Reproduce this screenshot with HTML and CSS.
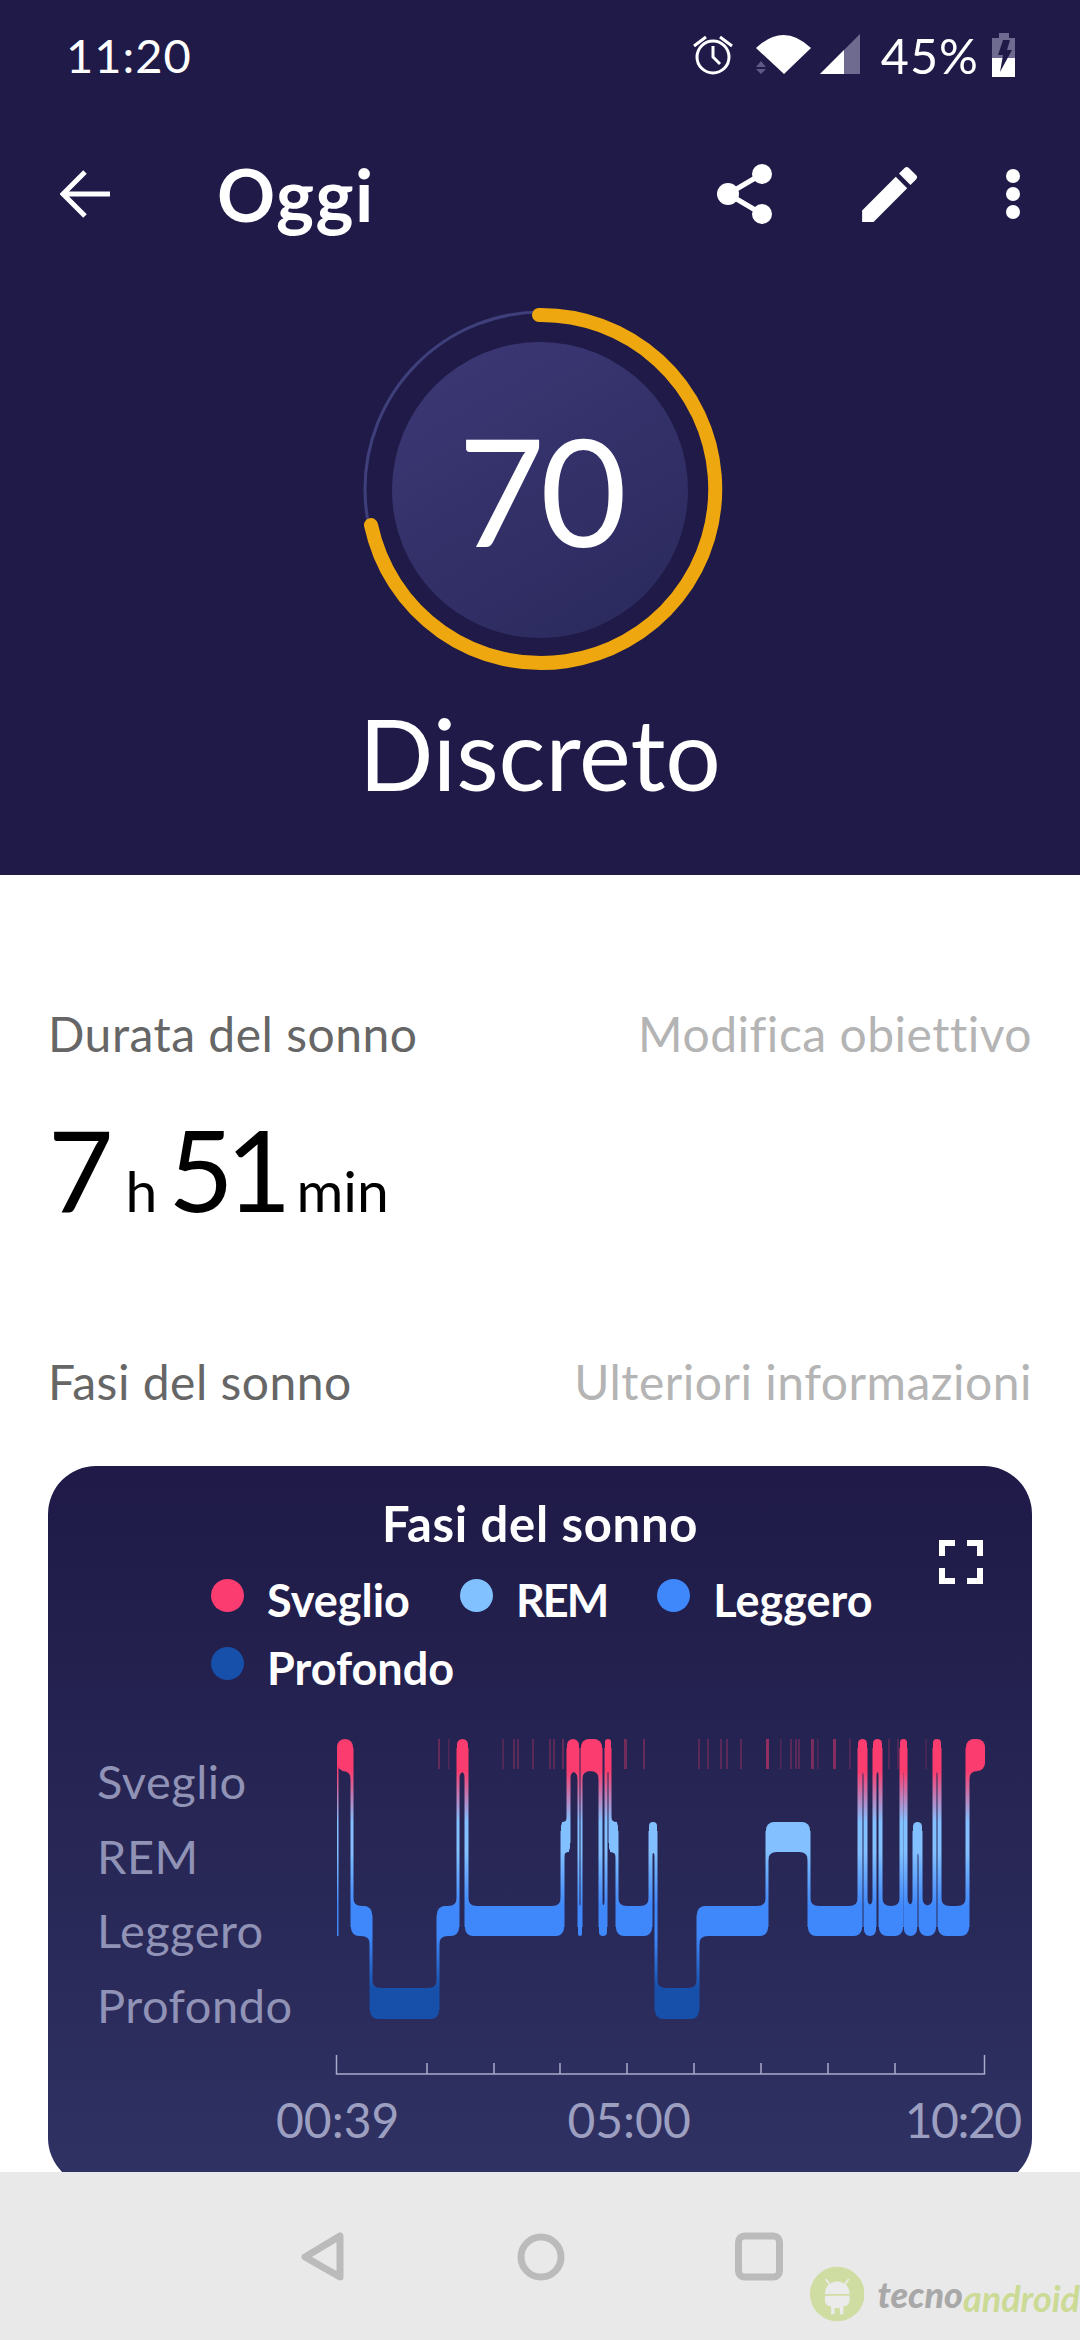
FILE: index.html
```html
<!DOCTYPE html>
<html lang="it">
<head>
    <meta charset="UTF-8">
    <meta name="viewport" content="width=device-width, initial-scale=1.0">
    <title>Oggi</title>
    <link rel="stylesheet" href="styles.css">
</head>
<body>

<header class="hero">
    <div class="status-bar">
        <span class="clock">11:20</span>
        <div class="status-icons">
            <svg class="icon-alarm" width="44" height="42" viewBox="690 36 44 42">
                <circle cx="712" cy="59" r="16" fill="none" stroke="#fff" stroke-width="3"/>
                <path d="M712 48V59L719 66M693 48L705 39M731 48L719 39" fill="none" stroke="#fff" stroke-width="3"/>
            </svg>
            <svg class="icon-wifi" width="60" height="42" viewBox="752 35 60 42">
                <path d="M755 49Q782.5 23 810 49L783 75Z" fill="#fff"/>
                <path d="M760 62L765 68H755ZM760 75L755 70H765Z" fill="#5d5a85"/>
            </svg>
            <svg class="icon-signal" width="42" height="42" viewBox="817 35 42 42">
                <path d="M818 75L858 35V75Z" fill="#6e6a90"/>
                <path d="M818 75L842 51V75Z" fill="#fff"/>
            </svg>
            <span class="battery-text">45%</span>
            <svg class="icon-battery" width="24" height="44" viewBox="992 33 24 44">
                <path d="M999 33H1009V38H1015V58H992V38H999Z" fill="#6e6a90"/>
                <rect x="992" y="58" width="23" height="19" fill="#fff"/>
                <path d="M1003 40H1010L1007 50H1012L1000 72L1003 55H998Z" fill="#1f1a47"/>
            </svg>
        </div>
    </div>

    <div class="toolbar">
        <svg class="icon-back" width="52" height="50" viewBox="60 169 52 50">
            <path d="M110 194H64M85 172L63 194L85 216" fill="none" stroke="#fff" stroke-width="5"/>
        </svg>
        <h1 class="toolbar-title">Oggi</h1>
        <svg class="icon-share" width="56" height="62" viewBox="716 162 56 62">
            <path d="M761 173L727 193L761 213" fill="none" stroke="#fff" stroke-width="5"/>
            <circle cx="761" cy="173" r="10" fill="#fff"/>
            <circle cx="727" cy="193" r="11" fill="#fff"/>
            <circle cx="761" cy="213" r="10" fill="#fff"/>
        </svg>
        <svg class="icon-edit" width="73" height="73" viewBox="0 0 24 24">
            <path d="M3 17.25V21h3.75L17.81 9.94l-3.75-3.75L3 17.25zM20.71 7.04a1 1 0 000-1.41l-2.34-2.34a1 1 0 00-1.41 0l-1.83 1.83 3.75 3.75 1.83-1.83z" fill="#fff"/>
        </svg>
        <div class="icon-more"><i></i><i></i><i></i></div>
    </div>

    <div class="score">
        <svg class="score-ring" width="400" height="400" viewBox="-202 -200 400 400">
            <defs>
                <linearGradient id="disc" x1="0.2" y1="0" x2="0.8" y2="1">
                    <stop offset="0" stop-color="#3b3774"/>
                    <stop offset="1" stop-color="#2b2a5d"/>
                </linearGradient>
            </defs>
            <circle cx="-2" cy="1" r="148" fill="url(#disc)"/>
            <circle cx="0" cy="0" r="177" fill="none" stroke="#3f3f7c" stroke-width="3"/>
            <path d="M-3 -174A174 174 0 1 1 -171 36" fill="none" stroke="#eea70e" stroke-width="14" stroke-linecap="round"/>
        </svg>
        <div class="score-value">70</div>
    </div>
    <div class="score-label">Discreto</div>
</header>

<main class="content">
    <div class="section-row">
        <span>Durata del sonno</span>
        <span class="section-link">Modifica obiettivo</span>
    </div>
    <div class="duration">
        <span class="duration-num">7</span><span class="duration-unit">h</span>
        <span class="duration-num">51</span><span class="duration-unit unit-min">min</span>
    </div>
    <div class="section-row section-phases">
        <span>Fasi del sonno</span>
        <span class="section-link">Ulteriori informazioni</span>
    </div>

    <section class="card">
        <h2 class="card-title">Fasi del sonno</h2>
        <svg class="icon-expand" width="44" height="44" viewBox="0 0 44 44">
            <path d="M3 16V3H16M28 3H41V16M3 28V41H16M41 28V41H28" fill="none" stroke="#fff" stroke-width="6"/>
        </svg>
        <div class="legend">
            <div class="legend-item"><span class="dot dot-awake"></span>Sveglio</div>
            <div class="legend-item legend-rem"><span class="dot dot-rem"></span>REM</div>
            <div class="legend-item"><span class="dot dot-light"></span>Leggero</div>
            <div class="legend-item"><span class="dot dot-deep"></span>Profondo</div>
        </div>
        <div class="chart">
            <div class="chart-levels">
                <div>Sveglio</div>
                <div>REM</div>
                <div>Leggero</div>
                <div>Profondo</div>
            </div>
            <svg id="sleep-chart" width="680" height="360" viewBox="320 1730 680 360">
                <defs>
                    <linearGradient id="sleep" gradientUnits="userSpaceOnUse" x1="0" y1="1772" x2="0" y2="1989">
                        <stop offset="0" stop-color="#fb3c6e"/>
                        <stop offset="0.235" stop-color="#82c0ff"/>
                        <stop offset="0.373" stop-color="#82c0ff"/>
                        <stop offset="0.622" stop-color="#3f88fb"/>
                        <stop offset="0.76" stop-color="#3f88fb"/>
                        <stop offset="1" stop-color="#1650aa"/>
                    </linearGradient>
                </defs>
                <g id="sleep-ticks"></g>
                <g id="sleep-bands" fill="url(#sleep)"></g>
                <path class="chart-axis" d="M336.5 2056V2075H984.5V2056M427 2064V2075M494 2064V2075M560 2064V2075M627 2064V2075M694 2064V2075M761 2064V2075M828 2064V2075M895 2064V2075"/>
            </svg>
        </div>
        <div class="chart-times">
            <span>00:39</span>
            <span class="time-mid">05:00</span>
            <span class="time-end">10:20</span>
        </div>
    </section>
</main>

<nav class="nav-bar">
    <svg width="48" height="50" viewBox="0 0 48 50">
        <path d="M41 4V45L6 25Z" fill="none" stroke="#bbb" stroke-width="7" stroke-linejoin="round"/>
    </svg>
    <svg width="48" height="50" viewBox="0 0 48 50">
        <circle cx="24" cy="25" r="20" fill="none" stroke="#bbb" stroke-width="7"/>
    </svg>
    <svg width="48" height="50" viewBox="0 0 48 50">
        <rect x="3.5" y="4" width="41" height="41" rx="6" fill="none" stroke="#bbb" stroke-width="7"/>
    </svg>
    <div class="watermark">
        <svg width="62" height="62" viewBox="0 0 62 62">
            <circle cx="31" cy="31" r="31" fill="#cfdca2"/>
            <path d="M18 14L23 21M44 14L39 21" stroke="#ebebeb" stroke-width="2"/>
            <path d="M17 31C17 12 45 12 45 31Z" fill="#ebebeb"/>
            <path d="M17 33H45V38C45 44 40 45 38 45V54H34V47H28V54H24V45C22 45 17 44 17 38Z" fill="#ebebeb"/>
        </svg>
        <span class="wm-tecno">tecno</span><span class="wm-android">android</span>
    </div>
</nav>

<script src="chart.js"></script>
</body>
</html>
```

FILE: styles.css
```css
* {
    box-sizing: border-box;
}

body {
    margin: 0;
    width: 1080px;
    height: 2340px;
    overflow: hidden;
    background: #fff;
    font-family: Lato, "Open Sans", sans-serif;
}

/* top dark part */
.hero {
    height: 875px;
    background: #1f1a47;
    color: #fff;
}

.status-bar {
    height: 110px;
    padding: 0 64px 0 66px;
    display: flex;
    align-items: center;
    justify-content: space-between;
    font-size: 47px;
}

.clock {
    letter-spacing: 1px;
}

.status-icons {
    display: flex;
    align-items: center;
    gap: 6px;
}

.icon-alarm {
    margin-right: 12px;
}

.battery-text {
    margin: 0 7px 0 14px;
    font-size: 48.5px;
    letter-spacing: 1px;
}

.toolbar {
    height: 88px;
    margin-top: 40px;
    padding-left: 60px;
    display: flex;
    align-items: center;
}

.toolbar-title {
    margin: 0 0 0 105px;
    font-size: 72px;
    font-weight: 700;
    letter-spacing: 1.5px;
}

.icon-share {
    margin-left: 342px;
}

.icon-edit {
    margin-left: 80px;
}

.icon-more {
    margin-left: 80px;
    display: flex;
    flex-direction: column;
    gap: 4px;
}

.icon-more i {
    width: 14px;
    height: 14px;
    border-radius: 50%;
    background: #fff;
}

.score {
    position: relative;
    width: 400px;
    height: 400px;
    margin: 51px auto 0;
}

.score-ring {
    display: block;
}

.score-value {
    position: absolute;
    inset: 0;
    display: flex;
    align-items: center;
    justify-content: center;
    font-size: 150px;
    letter-spacing: -5px;
}

.score-label {
    margin-top: 9px;
    text-align: center;
    font-size: 98px;
    line-height: 110px;
}

/* white part */
.content {
    height: 1297px;
    padding: 131px 48px 0;
    overflow: hidden;
}

.section-row {
    display: flex;
    justify-content: space-between;
    font-size: 48px;
    letter-spacing: 0.5px;
    line-height: 56px;
    color: #666;
}

.section-link {
    color: #b4b4b4;
}

.duration {
    margin-top: 46px;
    display: flex;
    align-items: baseline;
    line-height: 120px;
    color: #000;
}

.duration-num {
    font-size: 113px;
    letter-spacing: -8px;
}

.duration-unit {
    margin: 0 11px 0 20px;
    font-size: 57px;
}

.unit-min {
    margin-left: 13px;
}

.section-phases {
    margin-top: 104px;
}

.card {
    position: relative;
    height: 720px;
    margin-top: 56px;
    padding-top: 32px;
    border-radius: 48px;
    background: linear-gradient(#1f1a47, #2f3263);
    color: #fff;
}

.card-title {
    margin: 0;
    text-align: center;
    font-size: 49px;
    font-weight: 700;
    letter-spacing: 0.7px;
    line-height: 50px;
}

.icon-expand {
    position: absolute;
    top: 74px;
    right: 49px;
}

.legend {
    width: 680px;
    margin: 25px 0 0 163px;
    display: flex;
    flex-wrap: wrap;
    gap: 14px 50px;
}

.legend-item {
    display: flex;
    gap: 23px;
    font-size: 45px;
    font-weight: 700;
    line-height: 54px;
}

.legend-rem {
    letter-spacing: -2px;
}

.dot {
    width: 33px;
    height: 33px;
    margin-top: 6px;
    border-radius: 50%;
}

.dot-awake { background: #fb3c71; }
.dot-rem { background: #81c1ff; }
.dot-light { background: #3f88fb; }
.dot-deep { background: #1650aa; }

.chart {
    margin-top: 34px;
    padding-left: 49px;
    display: flex;
}

.chart-levels {
    width: 223px;
    padding-top: 15px;
    font-size: 47px;
    letter-spacing: 0.5px;
    line-height: 74.5px;
    color: #9092b6;
}

#sleep-chart {
    display: block;
}

.chart-axis {
    fill: none;
    stroke: #a9abc9;
    stroke-width: 1.5;
}

.chart-times {
    margin-top: 4px;
    padding-left: 228px;
    display: flex;
    font-size: 48px;
    line-height: 54px;
    color: #9c9fc0;
}

.time-mid {
    margin-left: 168px;
}

.time-end {
    margin-left: 214px;
    letter-spacing: -1.5px;
}

/* android nav bar */
.nav-bar {
    position: relative;
    height: 168px;
    padding: 60px 0 0 2px;
    background: #e9e9e9;
    display: flex;
    justify-content: center;
    gap: 170px;
}

.watermark {
    position: absolute;
    left: 810px;
    top: 91px;
    width: 270px;
    display: flex;
    align-items: center;
    font-size: 36px;
    font-weight: 900;
    font-style: italic;
}

.wm-tecno {
    margin-left: 13px;
    color: #a8a8a8;
}

.wm-android {
    margin-top: 8px;
    font-weight: 700;
    color: #cbda95;
}
```

FILE: chart.js
```js
const NS = 'http://www.w3.org/2000/svg';
const bandsGroup = document.getElementById('sleep-bands');
const ticksGroup = document.getElementById('sleep-ticks');

// top and bottom of each level: awake, rem, light, deep
const levels = [[1740, 1772], [1823, 1853], [1907, 1937], [1989, 2020]];

// level, start x, end x
const segments = [
    [0, 337, 353], [2, 351, 372], [3, 370, 439], [2, 437, 459], [0, 457, 468],
    [2, 465, 564], [1, 561, 570], [0, 567, 579], [2, 578, 582], [0, 581, 602],
    [2, 599, 607], [0, 605, 611], [1, 609, 618], [2, 616, 652], [1, 649, 657],
    [3, 655, 699], [2, 697, 768], [1, 766, 810], [2, 808, 862], [0, 858, 867],
    [2, 864, 876], [0, 873, 882], [2, 879, 903], [0, 900, 907], [2, 904, 917],
    [1, 913, 922], [2, 919, 936], [0, 933, 941], [2, 938, 969], [0, 966, 985]
];

// short wake-ups along the top row: x, width, opacity
const wakeTicks = [
    [438, 2, .3], [448, 1.5, .2], [502, 2, .2], [513, 2, .25], [517, 2, .25],
    [532, 2, .25], [549, 2, .25], [553, 2, .25], [562, 2, .3], [624, 3, .35],
    [643, 2, .3], [698, 2, .25], [707, 2, .25], [720, 2, .25], [726, 2, .25],
    [740, 2, .25], [766, 3, .5], [780, 1.5, .2], [790, 2, .25], [795, 2, .25],
    [798, 2, .25], [811, 3, .4], [817, 1.5, .2], [833, 3, .45], [849, 2, .2],
    [888, 2, .2], [897, 2, .2], [925, 2, .15]
];

function add(parent, tag, attrs) {
    const el = document.createElementNS(NS, tag);
    for (const name in attrs) {
        el.setAttribute(name, attrs[name]);
    }
    parent.appendChild(el);
}

function addRect(x, y, width, height, rx) {
    add(bandsGroup, 'rect', { x, y, width, height, rx });
}

// concave corner where a connector leaves a band, also squares off the band's own corner
function addFillet(x, y, dirX, dirY, size) {
    if (size <= 0) return;
    const d = `M${x} ${y - dirY * 8}H${x + dirX * size}V${y}Q${x} ${y} ${x} ${y + dirY * size}Z`;
    add(bandsGroup, 'path', { d });
}

wakeTicks.forEach(([x, width, opacity]) => {
    add(ticksGroup, 'rect', { x, y: 1740, width, height: 30, fill: '#fb3c6e', opacity });
});

// hairline at the very start of the chart
addRect(337, 1760, 1.5, 177, 0);

segments.forEach(([level, x0, x1], i) => {
    addRect(x0, levels[level][0], x1 - x0, levels[level][1] - levels[level][0], Math.min(8, (x1 - x0) / 2));

    const next = segments[i + 1];
    if (!next) return;

    const [nextLevel, nextX0, nextX1] = next;
    const goesDown = nextLevel > level;
    const upper = levels[goesDown ? level : nextLevel];
    const lower = levels[goesDown ? nextLevel : level];
    const width = x1 - nextX0;
    addRect(nextX0 - 0.5, upper[0] + 9, width + 1, lower[1] - upper[0] - 18, 0);

    const leftSize = Math.min(9, x1 - x0 - width - 1);
    const rightSize = Math.min(9, nextX1 - nextX0 - width - 1);
    if (goesDown) {
        addFillet(nextX0, upper[1], -1, 1, leftSize);
        addFillet(x1, lower[0], 1, -1, rightSize);
    } else {
        addFillet(nextX0, lower[0], -1, -1, leftSize);
        addFillet(x1, upper[1], 1, 1, rightSize);
    }
});
```
